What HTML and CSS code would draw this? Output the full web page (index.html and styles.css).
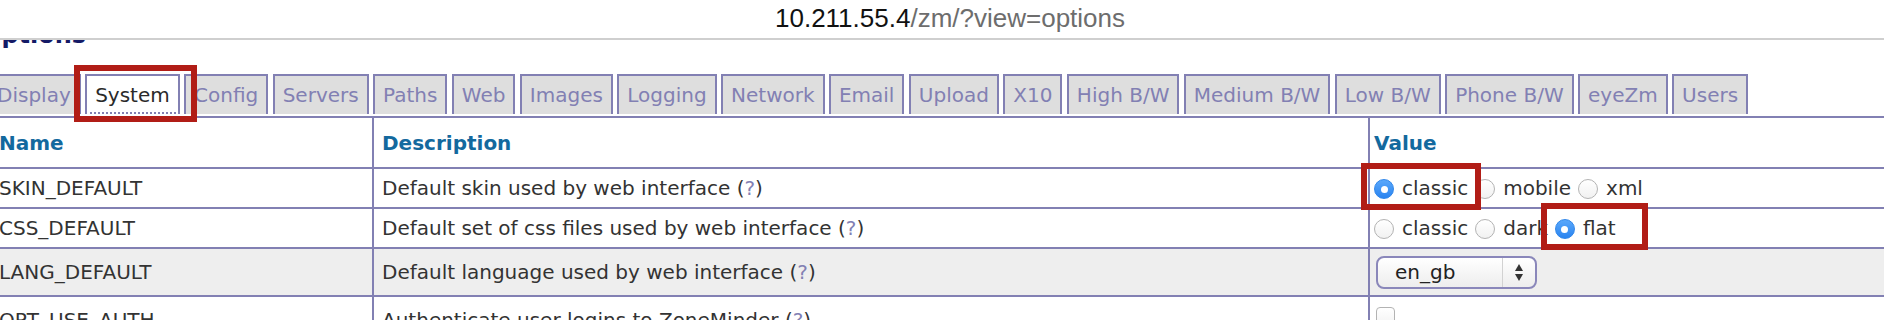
FILE: index.html
```html
<!DOCTYPE html>
<html>
<head>
<meta charset="utf-8">
<title>ZoneMinder - Options</title>
<link rel="stylesheet" href="styles.css">
</head>
<body>
<div class="chrome">
  <div class="url"><span class="host">10.211.55.4</span><span class="path">/zm/?view=options</span></div>
</div>
<div class="viewport">
  <div class="content">
    <h2 class="title">Options</h2>
    <ul class="tabs">
      <li class="tab">Display</li>
      <li class="tab active">System</li>
      <li class="tab">Config</li>
      <li class="tab">Servers</li>
      <li class="tab">Paths</li>
      <li class="tab">Web</li>
      <li class="tab">Images</li>
      <li class="tab">Logging</li>
      <li class="tab">Network</li>
      <li class="tab">Email</li>
      <li class="tab">Upload</li>
      <li class="tab">X10</li>
      <li class="tab">High B/W</li>
      <li class="tab">Medium B/W</li>
      <li class="tab">Low B/W</li>
      <li class="tab">Phone B/W</li>
      <li class="tab">eyeZm</li>
      <li class="tab">Users</li>
    </ul>
    <div class="grid">
      <div class="cell head">Name</div>
      <div class="cell head">Description</div>
      <div class="cell head val">Value</div>

      <div class="cell">SKIN_DEFAULT</div>
      <div class="cell">Default skin used by web interface (<span class="q">?</span>)</div>
      <div class="cell val">
        <span class="radio checked"></span><span class="opt">classic</span>
        <span class="radio"></span><span class="opt">mobile</span>
        <span class="radio"></span><span class="opt">xml</span>
      </div>

      <div class="cell">CSS_DEFAULT</div>
      <div class="cell">Default set of css files used by web interface (<span class="q">?</span>)</div>
      <div class="cell val">
        <span class="radio"></span><span class="opt">classic</span>
        <span class="radio"></span><span class="opt">dark</span>
        <span class="radio checked"></span><span class="opt">flat</span>
      </div>

      <div class="cell alt tall">LANG_DEFAULT</div>
      <div class="cell alt tall">Default language used by web interface (<span class="q">?</span>)</div>
      <div class="cell alt tall val">
        <div class="select"><span class="sel-text">en_gb</span><span class="sel-arrows"><span class="up"></span><span class="down"></span></span></div>
      </div>

      <div class="cell">OPT_USE_AUTH</div>
      <div class="cell">Authenticate user logins to ZoneMinder (<span class="q">?</span>)</div>
      <div class="cell val top"><span class="checkbox"></span></div>
    </div>
  </div>
</div>
<div class="mark mark-tab"></div>
<div class="mark mark-classic"></div>
<div class="mark mark-flat"></div>
</body>
</html>
```
FILE: styles.css
```css
html, body {
  margin: 0;
  padding: 0;
  background: #ffffff;
  overflow: hidden;
}
body {
  width: 1884px;
  height: 320px;
  position: relative;
  font-family: "DejaVu Sans", Verdana, sans-serif;
  color: #333333;
}
.chrome {
  height: 38px;
  border-bottom: 2px solid #cfcfcf;
  display: flex;
  align-items: center;
  justify-content: center;
  padding-left: 16px;
  box-sizing: content-box;
}
.url {
  font-family: "Liberation Sans", Arial, sans-serif;
  font-size: 26px;
  line-height: 30px;
  margin-top: -2px;
}
.host { color: #111111; }
.path { color: #6d6d6d; }

.viewport {
  height: 280px;
  overflow: hidden;
}
.content {
  margin-top: -20px;
  margin-left: -13px;
  width: 2000px;
}
.title {
  margin: 0 0 0 -6px;
  font-size: 24px;
  line-height: 30px;
  font-weight: bold;
  color: #141a66;
}
.tabs {
  list-style: none;
  margin: 24px 0 2px 0;
  padding: 0;
  display: flex;
  gap: 4.4px;
}
.tab {
  height: 38px;
  line-height: 38px;
  font-size: 20px;
  padding: 0 8px;
  border: 2px solid #8280b3;
  border-bottom: none;
  background: #dedede;
  color: #8280b3;
  white-space: nowrap;
}
.tab.active {
  background: #ffffff;
  color: #2a2a2a;
  height: 36px;
  border-bottom: 2px dotted #8280b3;
}
.grid {
  margin-left: 2px;
  display: grid;
  grid-template-columns: 383px 996px 600px;
  grid-template-rows: 51px 40px 40px 48px 48px;
  border-top: 2px solid #8280b3;
  border-left: 2px solid #8280b3;
  font-size: 20px;
  line-height: 24px;
}
.cell {
  box-sizing: border-box;
  border-right: 2px solid #8280b3;
  border-bottom: 2px solid #8280b3;
  padding: 0 8px;
  display: flex;
  align-items: center;
  white-space: nowrap;
  color: #333333;
}
.cell.head {
  font-weight: bold;
  color: #13699e;
}
.cell.val {
  padding-left: 4px;
}
.cell.alt {
  background: #eeeeee;
}
.cell.top {
  align-items: flex-start;
  padding-top: 10px;
}
.q { color: #8280b3; }

.radio {
  width: 20px;
  height: 20px;
  box-sizing: border-box;
  border-radius: 50%;
  border: 1px solid #b3b3b3;
  background: linear-gradient(#ffffff, #f1f1f1);
  margin-right: 8px;
  margin-top: 2px;
  flex: none;
  position: relative;
}
.radio.checked {
  border: 1px solid #2f86ea;
  background: linear-gradient(#5aa8fb, #2a84f0);
}
.radio.checked::after {
  content: "";
  position: absolute;
  left: 5.5px;
  top: 5.5px;
  width: 7px;
  height: 7px;
  border-radius: 50%;
  background: #ffffff;
}
.opt {
  margin-right: 7px;
}

.select {
  margin-left: 2px;
  width: 161px;
  height: 33px;
  box-sizing: border-box;
  border: 2px solid #8a87ba;
  border-radius: 8px;
  background: linear-gradient(#ffffff, #ededed);
  display: flex;
  align-items: center;
}
.sel-text {
  flex: 1;
  padding-left: 17px;
  color: #222222;
}
.sel-arrows {
  width: 32px;
  height: 29px;
  border-left: 1px solid #d2d2d2;
  display: flex;
  flex-direction: column;
  align-items: center;
  justify-content: center;
  gap: 3px;
}
.up {
  width: 0;
  height: 0;
  border-left: 4px solid transparent;
  border-right: 4px solid transparent;
  border-bottom: 7px solid #333333;
}
.down {
  width: 0;
  height: 0;
  border-left: 4px solid transparent;
  border-right: 4px solid transparent;
  border-top: 7px solid #333333;
}
.checkbox {
  margin-left: 2px;
  width: 19px;
  height: 19px;
  box-sizing: border-box;
  border: 1px solid #b3b3b3;
  border-radius: 4px;
  background: linear-gradient(#ffffff, #f3f3f3);
}

.mark {
  position: absolute;
  border: 6px solid #b11d16;
  box-sizing: border-box;
}
.mark-tab {
  left: 74px;
  top: 65px;
  width: 123px;
  height: 57px;
}
.mark-classic {
  left: 1361px;
  top: 163px;
  width: 120px;
  height: 47px;
}
.mark-flat {
  left: 1541px;
  top: 203px;
  width: 107px;
  height: 47px;
}
```
